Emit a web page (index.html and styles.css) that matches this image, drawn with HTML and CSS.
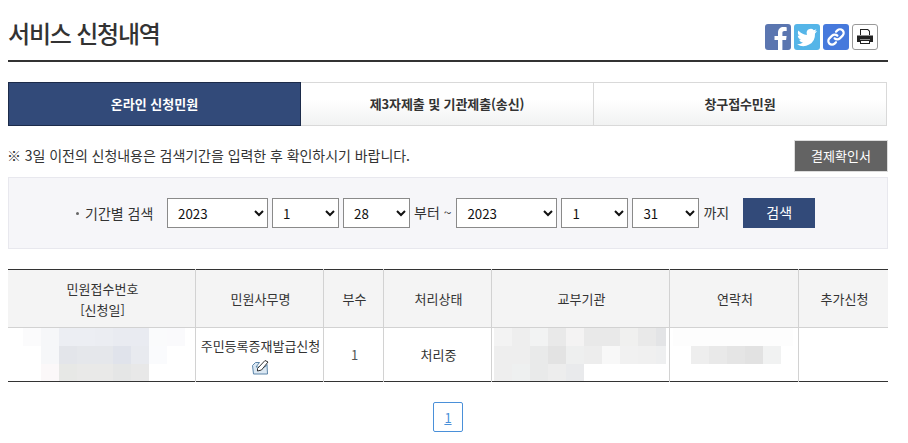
FILE: index.html
```html
<!DOCTYPE html>
<html lang="ko">
<head>
<meta charset="utf-8">
<title>서비스 신청내역</title>
<link rel="stylesheet" href="styles.css">
</head>
<body>
<div class="page">
  <header class="head">
    <h1 class="title">서비스 신청내역</h1>
    <div class="share">
      <a class="sbtn fb"><svg viewBox="0 0 26 26" width="26" height="26"><path fill="#fff" d="M13 26V16H9.500v-4H13V8.800C13 5 15.300 3 18.500 3c1.500 0 2.800.1 3.200.2V7h-2.200c-1.700 0-2.100.8-2.100 2v3h4.200l-.5 4h-3.700v10z"/></svg></a>
      <a class="sbtn tw"><svg viewBox="0 0 24 24" width="24" height="24"><path fill="#fff" d="M22 5.800c-.7.300-1.500.6-2.400.7.900-.5 1.500-1.300 1.800-2.300-.8.5-1.700.8-2.600 1A4.100 4.100 0 0 0 11.800 9c0 .3 0 .6.100.9C8.500 9.800 5.500 8.100 3.400 5.600c-1.100 1.900-.5 4.300 1.300 5.500-.7 0-1.300-.2-1.900-.5 0 2 1.400 3.700 3.300 4.100-.6.200-1.200.2-1.900.1.500 1.600 2 2.800 3.800 2.800A8.300 8.300 0 0 1 2 19.300 11.700 11.700 0 0 0 20 8.900v-.5c.8-.6 1.500-1.400 2-2.600z"/></svg></a>
      <a class="sbtn ln"><svg viewBox="0 0 24 24" width="22" height="22" fill="none" stroke="#fff" stroke-width="2.400" stroke-linecap="round"><path d="M10.500 13.500a4 4 0 0 0 5.700 0l3-3a4 4 0 0 0-5.700-5.700l-1.500 1.500"/><path d="M13.500 10.500a4 4 0 0 0-5.700 0l-3 3a4 4 0 0 0 5.700 5.700l1.500-1.500"/></svg></a>
      <a class="sbtn pr"><svg viewBox="0 0 18 18" width="18" height="18"><path fill="#222" d="M4 1h8l2 2v4H4zM5 2v5h8V3.500L11.500 2z"/><path fill="#222" d="M1 7.500h16V14h-3v-2.500H4V14H1z"/><path fill="#222" d="M4 12h10v4H4zm1 1v2h8v-2z" fill-rule="evenodd"/></svg></a>
    </div>
  </header>

  <nav class="tabs">
    <a class="tab tab-on">온라인 신청민원</a>
    <a class="tab">제3자제출 및 기관제출(송신)</a>
    <a class="tab">창구접수민원</a>
  </nav>

  <div class="notice">
    <p class="notice-text">※ 3일 이전의 신청내용은 검색기간을 입력한 후 확인하시기 바랍니다.</p>
    <a class="receipt">결제확인서</a>
  </div>

  <form class="search">
    <span class="search-label">기간별 검색</span>
    <select class="sel sel-y"><option>2023</option></select>
    <select class="sel sel-m"><option>1</option></select>
    <select class="sel sel-m"><option>28</option></select>
    <span class="word">부터 ~</span>
    <select class="sel sel-y"><option>2023</option></select>
    <select class="sel sel-m"><option>1</option></select>
    <select class="sel sel-m"><option>31</option></select>
    <span class="word word-end">까지</span>
    <button type="button" class="go">검색</button>
  </form>

  <table class="list">
    <colgroup>
      <col class="c1"><col class="c2"><col class="c3"><col class="c4"><col class="c5"><col class="c6"><col class="c7">
    </colgroup>
    <thead>
      <tr>
        <th>민원접수번호<br>[신청일]</th>
        <th>민원사무명</th>
        <th>부수</th>
        <th>처리상태</th>
        <th>교부기관</th>
        <th>연락처</th>
        <th>추가신청</th>
      </tr>
    </thead>
    <tbody>
      <tr>
        <td class="mos-cell">
          <div class="mos mos-a">
            <div class="mr"><i style="background:#fbfbfc"></i><i style="background:#f6f7f9"></i><i style="background:#eceef3"></i><i style="background:#eceef3"></i><i style="background:#ebedf2"></i><i style="background:#e9ebf1"></i><i style="background:#e9ebf1"></i><i style="background:#fafbfc"></i><i style="background:#fafafc"></i></div>
            <div class="mr"><i></i><i style="background:#f6f7f9"></i><i style="background:#e3e5ea"></i><i style="background:#e5e7eb"></i><i style="background:#e5e7eb"></i><i style="background:#e0e3eb"></i><i style="background:#e8eaef"></i><i style="background:#fafbfd"></i><i></i></div>
            <div class="mr mr-s"><i></i><i style="background:#fbf8f9"></i><i style="background:#e7e8e6"></i><i style="background:#e9e9e8"></i><i style="background:#e9e9e8"></i><i style="background:#e5e6e6"></i><i style="background:#e8e8e8"></i><i></i><i></i></div>
          </div>
        </td>
        <td class="name">주민등록증재발급신청<br>
          <svg class="edit" viewBox="0 0 18 16" width="18" height="16"><path fill="#dbe8f3" stroke="#5d85a8" d="M.5 6.500l3-3h4L4 8h9l2-2.500.5 9.500H1.500z"/><path fill="#fff" stroke="#333" d="M5.500 9.500l7.500-8 3 1.500-6.500 8-4 1z"/></svg>
        </td>
        <td class="num">1</td>
        <td>처리중</td>
        <td class="mos-cell">
          <div class="mos mos-b">
            <div class="mr"><i style="background:#f3f3f3"></i><i style="background:#eeeeee"></i><i style="background:#f2f3f3"></i><i style="background:#e9e9e9"></i><i style="background:#f4f3f3"></i><i style="background:#e9e9e9"></i><i style="background:#e9e9e9"></i><i style="background:#f0f0ef"></i><i style="background:#e9e9e9"></i><i class="m-end" style="background:#e3e4e6"></i></div>
            <div class="mr"><i style="background:#eeeeee"></i><i style="background:#eeeeee"></i><i style="background:#e9eaea"></i><i style="background:#e3e3e3"></i><i style="background:#eeefef"></i><i style="background:#ededed"></i><i style="background:#f8f8f8"></i><i style="background:#f1f1f1"></i><i style="background:#f0f0f0"></i><i class="m-end" style="background:#eeeff0"></i></div>
            <div class="mr mr-s"><i style="background:#eeeeee"></i><i style="background:#eef0f0"></i><i style="background:#e9eaea"></i><i style="background:#ededed"></i><i style="background:#e9eaec"></i></div>
          </div>
        </td>
        <td class="mos-cell">
          <div class="mos mos-c">
            <div class="mr"><i style="background:#fdfdfd"></i><i style="background:#fdfdfd"></i><i style="background:#fdfdfd"></i><i style="background:#fdfdfd"></i><i style="background:#fdfdfd"></i><i style="background:#fdfdfd"></i><i class="m-last" style="background:#fdfdfd"></i></div>
            <div class="mr"><i></i><i style="background:#eeeeee"></i><i style="background:#e9e9e9"></i><i style="background:#e5e5e5"></i><i style="background:#e2e2e2"></i><i style="background:#f1f2f2"></i></div>
          </div>
        </td>
        <td></td>
      </tr>
    </tbody>
  </table>

  <div class="pager"><a class="pg">1</a></div>
</div>
</body>
</html>
```
FILE: styles.css
```css
* { box-sizing: border-box; }
html, body { margin: 0; padding: 0; background: #fff; }
body {
  font-family: "Noto Sans CJK KR", "Noto Sans", sans-serif;
  font-size: 13px;
  color: #333;
  overflow: hidden;
}
.page { width: 880px; margin-left: 8px; }

.head {
  height: 62px;
  display: flex;
  justify-content: space-between;
  align-items: flex-start;
  border-bottom: 2px solid #333;
}
.title { margin: 15px 0 0; font-size: 24px; font-weight: 500; line-height: 36px; color: #333; letter-spacing: -1.2px; }
.share { display: flex; gap: 3px; margin: 24px 10px 0 0; }
.sbtn { width: 26px; height: 26px; border-radius: 3px; display: flex; align-items: center; justify-content: center; overflow: hidden; }
.fb { background: #5b76b0; }
.tw { background: #55b5e8; }
.ln { background: #4679dc; }
.pr { background: #fff; border: 1px solid #999; }

.tabs { display: flex; margin-top: 20px; height: 44px; width: 879px; }
.tab {
  flex: 1 1 0;
  display: flex;
  align-items: center;
  justify-content: center;
  padding-bottom: 2px;
  font-size: 13px;
  font-weight: 700;
  letter-spacing: -0.1px;
  color: #333;
  border: 1px solid #d9d9d9;
  border-left: 0;
  background: linear-gradient(#fff 40%, #f1f2f2);
}
.tab-on {
  flex: 0 0 293px;
  background: #324a79;
  border: 1px solid #1c2b4a;
  color: #fff;
  letter-spacing: 0;
}

.notice { display: flex; justify-content: space-between; align-items: center; height: 32px; margin-top: 14px; }
.notice-text { margin: 0 0 2px -1px; font-size: 14px; letter-spacing: -0.05px; color: #333; }
.receipt {
  width: 94px;
  height: 32px;
  display: flex;
  align-items: center;
  justify-content: center;
  padding-bottom: 2px;
  background: #636363;
  border: 1px solid #dcdcdc;
  color: #fff;
  font-size: 13px;
}

.search {
  display: flex;
  align-items: flex-start;
  height: 72px;
  margin-top: 5px;
  padding: 20px 0 0 66px;
  background: #f6f6f9;
  border: 1px solid #e8e8ee;
}
.search-label { position: relative; width: 92px; line-height: 30px; font-size: 14px; padding-left: 10px; }
.search-label::before { content: ""; position: absolute; left: 1px; top: 14px; width: 3px; height: 3px; border-radius: 50%; background: #666; }
.sel {
  height: 30px;
  margin: 0 4px 0 0;
  padding: 0 0 0 6px;
  background-color: #fff;
  border: 1px solid #8a8a8a;
  border-radius: 0;
  font-family: "Noto Sans CJK KR", "Noto Sans", sans-serif;
  font-size: 13.3px;
  color: #111;
}
.sel-y { width: 101px; }
.sel-m { width: 67px; }
.word { line-height: 28px; font-size: 14px; margin-right: 5px; white-space: nowrap; }
.word-end { margin: 0 14px 0 0; }
.go { width: 72px; height: 30px; padding: 0 0 2px; background: #324a79; border: 0; color: #fff; font-family: inherit; font-size: 14px; }

.list { width: 880px; margin-top: 20px; border-collapse: collapse; table-layout: fixed; border-top: 1px solid #333; border-bottom: 1px solid #333; }
.c1 { width: 187.500px; } .c2 { width: 128px; } .c3 { width: 60px; } .c4 { width: 108px; } .c5 { width: 178px; } .c6 { width: 129px; } .c7 { width: 89.500px; }
.list th, .list td { border-left: 1px solid #d2d2d2; border-right: 1px solid #d2d2d2; text-align: center; font-size: 13px; line-height: 22px; padding: 0 0 0 2px; }
.list th:first-child, .list td:first-child { border-left: 0; }
.list th:last-child, .list td:last-child { border-right: 0; }
.list th { height: 58px; line-height: 21px; background: #f4f4f4; font-weight: 400; border-bottom: 1px solid #d2d2d2; }
.list td { height: 53px; }
.list td.num { color: #555; }
.name { vertical-align: middle; }
.edit { display: block; margin: 2px auto 0; }

.list td.mos-cell { vertical-align: top; padding: 0; }
.mos { display: flex; flex-direction: column; }
.mos-a { margin-left: 15px; }
.mos-b { margin-left: 2px; }
.mos-c { margin-left: 3px; }
.mr { display: flex; height: 18px; }
.mr-s { height: 17px; }
.mr i { display: block; flex: 0 0 18px; width: 18px; }
.mr i.m-end { flex-basis: 10px; }
.mr i.m-last { flex-basis: 12px; }

.pager { display: flex; justify-content: center; margin-top: 20px; }
.pg { width: 30px; height: 30px; display: flex; align-items: center; justify-content: center; border: 1px solid #4a90d9; border-radius: 2px; color: #4a90d9; text-decoration: underline; font-weight: 400; font-size: 13px; }
```
